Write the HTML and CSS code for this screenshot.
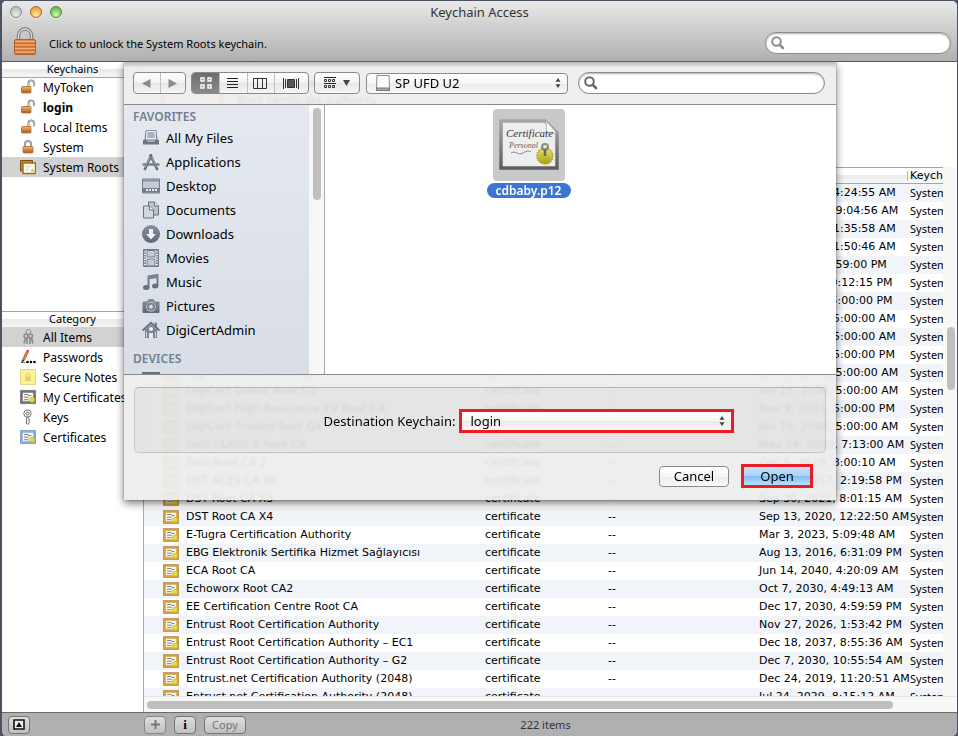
FILE: index.html
```html
<!DOCTYPE html>
<html lang="en">
<head>
<meta charset="utf-8">
<title>Keychain Access</title>
<link rel="stylesheet" href="styles.css">
</head>
<body>
<svg class="defs" aria-hidden="true">
  <defs>
    <linearGradient id="brass" x1="0" y1="0" x2="0" y2="1"><stop offset="0" stop-color="#e8a25e"/><stop offset=".3" stop-color="#f3b678"/><stop offset="1" stop-color="#b0561c"/></linearGradient>
    <linearGradient id="slate" x1="0" y1="0" x2="0" y2="1"><stop offset="0" stop-color="#8993a0"/><stop offset="1" stop-color="#5d6875"/></linearGradient>
    <linearGradient id="frame" x1="0" y1="0" x2="0" y2="1"><stop offset="0" stop-color="#a6a6a6"/><stop offset="1" stop-color="#5e5e5e"/></linearGradient>
    <linearGradient id="seal" x1="0" y1="0" x2="0" y2="1"><stop offset="0" stop-color="#eae66a"/><stop offset="1" stop-color="#a89d17"/></linearGradient>
    <symbol id="unlocked" viewBox="0 0 16 16"><path d="M8.500 8V4.300a2.700 2.700 0 0 1 5.400 0v3" fill="none" stroke="#8b8b8b" stroke-width="2"/><path d="M8.500 8V4.300a2.700 2.700 0 0 1 5.400 0v3" fill="none" stroke="#d8d8d8" stroke-width=".7"/><rect x="1.500" y="7.500" width="9.500" height="6.500" rx="1" fill="url(#brass)" stroke="#b06a2e" stroke-width=".8"/><path d="M2 10h8.500M2 12h8.500" stroke="#a95b22" stroke-width=".6"/></symbol>
    <symbol id="locked" viewBox="0 0 16 16"><path d="M5 8V5a3 3 0 0 1 6 0v3" fill="none" stroke="#858585" stroke-width="2"/><path d="M5 8V5a3 3 0 0 1 6 0v3" fill="none" stroke="#d4d4d4" stroke-width=".7"/><rect x="3" y="7.500" width="10" height="6.500" rx="1" fill="url(#brass)" stroke="#b06a2e" stroke-width=".8"/><path d="M3.500 10h9M3.500 12h9" stroke="#a95b22" stroke-width=".6"/></symbol>
    <symbol id="roots" viewBox="0 0 16 16"><path d="M.5 1.500h12V12H.5z" fill="#c48a35" stroke="#7a4d12"/><path d="M3 4h12.500v10.500H3z" fill="#fdfbf4" stroke="#a06a1d" stroke-width="1.400"/><path d="M5 7h7M5 9h5M5 11h4" stroke="#d5cdbb" stroke-width=".8"/><circle cx="12.500" cy="11.500" r="1.700" fill="#d6d84e"/></symbol>
    <symbol id="keys" viewBox="0 0 16 16"><g fill="none" stroke="#8c8c8c"><circle cx="8.500" cy="3" r="2.500"/><circle cx="6" cy="7" r="2" stroke-width="1.500"/><circle cx="10.500" cy="7" r="2" stroke-width="1.500"/><path d="M5.500 9 4 14.500M7 9v6M10 9v6M11.500 9l1.500 5.500" stroke-width="1.700"/></g></symbol>
    <symbol id="pencil" viewBox="0 0 16 16"><path d="M1.500 13.500 3 9.500 6.500 2l2 .8L5 10.500z" fill="#e88546" stroke="#7c4a2b" stroke-width=".6"/><path d="m6.500 2 2 .8.6-1.500-2-.8z" fill="#c44"/><path d="m1.500 13.500 1-3 2 1z" fill="#333"/><path d="M1 13.500h4.500" stroke="#777"/><circle cx="7.500" cy="13" r="1.300"/><circle cx="11" cy="13" r="1.300"/><circle cx="14.500" cy="13" r="1.300"/></symbol>
    <symbol id="note" viewBox="0 0 16 16"><path d="M.5.500h15v15H.5z" fill="#fbf390" stroke="#e3d98b"/><path d="M6.300 8V6a1.700 1.700 0 0 1 3.400 0v2" fill="none" stroke="#ddd27a"/><rect x="5.300" y="7.500" width="5.400" height="4.500" fill="#dfd16a"/></symbol>
    <symbol id="cert" viewBox="0 0 16 14"><path d="M1.500 1.500h13v11h-13z" fill="#f7f7f4" stroke="currentColor" stroke-width="2.600"/><path d="M.3.300h15.400v13.400H.3z" fill="none" stroke="#555" stroke-opacity=".5" stroke-width=".6"/><path d="M4 4.500h4.500M8.500 5.500h3M4 7.200h5M4 9.700h4.500" stroke="#777" stroke-width=".9"/><circle cx="12" cy="9.700" r="2.600" fill="#e6dc3a" stroke="#b8ab24" stroke-width=".5"/></symbol>
    <symbol id="key" viewBox="0 0 16 16"><circle cx="7.500" cy="4.500" r="3.700" fill="#f2f2f2" stroke="#777"/><circle cx="7.500" cy="4.500" r="1.500" fill="#fff" stroke="#666"/><path d="M6.500 8.300h2.200v1.500l1.300.9-1.300 1 1.200 1-1.200 1.300v1l-1.100 1-1.100-1z" fill="#eee" stroke="#666" stroke-width=".8"/></symbol>
    <symbol id="allfiles" viewBox="0 0 18 18"><path d="M4 1.500h10l1 9.500H3z" fill="#eceff3" stroke="url(#slate)"/><path d="M5.500 4h7M5.300 6h7.500M5 8h8" stroke="#6f7986"/><path d="M1 11h3.500l1 1.500h7l1-1.500H17v4.500H1z" fill="#6c7784"/></symbol>
    <symbol id="apps" viewBox="0 0 18 18"><path d="M.5 11.500h17" stroke="#7a8592" stroke-width="2.500"/><path d="M9.500 1.500 2.500 17M8 1.500 15.500 17" stroke="#66717e" stroke-width="2.600"/><path d="m8.200 3.500-5 11M9.800 4.500l4.500 9.500" stroke="#b3bbc5" stroke-width=".7"/></symbol>
    <symbol id="desktop" viewBox="0 0 18 18"><path d="M.5 2h17v14H.5z" fill="#c3cad4" stroke="#717c89"/><path d="M1 2.500h16v2H1z" fill="#8a94a1"/><path d="M1 11h16v4.500H1z" fill="#737e8b"/><path d="M4 13h2M7 13h2M10 13h2M13 13h2" stroke="#eef1f5" stroke-width="2"/></symbol>
    <symbol id="docs" viewBox="0 0 18 18"><path d="M6.500 1h6l4 4v9h-10z" fill="#bac2cc" stroke="#687380"/><path d="M12.500 1v4h4" fill="#edf0f4" stroke="#687380"/><path d="M1.500 5h6l4 4v8h-10z" fill="#d1d7df" stroke="#687380"/><path d="M7.500 5v4h4" fill="#f3f5f8" stroke="#687380"/></symbol>
    <symbol id="down" viewBox="0 0 18 18"><circle cx="9" cy="9" r="9" fill="url(#slate)"/><path d="M7 4h4v5h3l-5 5.500L4 9h3z" fill="#f1f4f8"/></symbol>
    <symbol id="movies" viewBox="0 0 18 18"><path d="M1.500.5h15v17h-15z" fill="#eef1f5" stroke="#717b88"/><path d="M5 1.500h8V8H5zM5 10h8v7H5z" fill="#c3cad3" stroke="#75808d"/><path d="M3 1v17M15 1v17" stroke="#717b88" stroke-width="1.700" stroke-dasharray="1.500 1"/></symbol>
    <symbol id="music" viewBox="0 0 18 18"><path d="M6.500 14V3.500L15.500 2v11" fill="none" stroke="#66717e" stroke-width="1.800"/><path d="M6 2.500 16 1v4L6 6.500z" fill="#7a8592"/><ellipse cx="4.300" cy="14.500" rx="3.300" ry="2.500" fill="#66717e"/><ellipse cx="13.200" cy="13" rx="3.200" ry="2.500" fill="#66717e"/></symbol>
    <symbol id="camera" viewBox="0 0 18 18"><path d="M1.500 4.500H5L6.500 2h5L13 4.500h3.500a1 1 0 0 1 1 1V15a1 1 0 0 1-1 1h-15a1 1 0 0 1-1-1V5.500a1 1 0 0 1 1-1z" fill="url(#slate)"/><circle cx="9" cy="9.800" r="4.800" fill="#e1e5eb"/><circle cx="9" cy="9.800" r="3.300" fill="#a9b2bd" stroke="#697481" stroke-width="1.500"/><circle cx="9" cy="9.500" r="1.200" fill="#e8ebf0"/></symbol>
    <symbol id="home" viewBox="0 0 18 18"><path d="M12.500 1.500H15v5h-2.500zM3 8.500h12V17H3z" fill="#7b8693"/><path d="M3 9 9 3.500 15 9z" fill="#7b8693"/><path d="M.7 9.500 9 1.800l8.300 7.700" fill="none" stroke="#66717e" stroke-width="2"/><circle cx="9" cy="8" r="2" fill="#eef1f5"/><path d="M7 12h4v5H7z" fill="#e6eaef"/><path d="M4.500 11v5M13.500 11v5" stroke="#d5dbe2"/></symbol>
    <symbol id="glass" viewBox="0 0 14 14"><circle cx="5.500" cy="5.500" r="4.300" fill="none" stroke="currentColor" stroke-width="2"/><path d="m8.800 8.800 3.200 3.200" stroke="currentColor" stroke-width="2.600" stroke-linecap="round"/></symbol>
    <symbol id="arrows" viewBox="0 0 6 12"><path d="M3 0 6 4.500H0zM3 12 0 7.500h6z" fill="#444"/></symbol>
  </defs>
</svg>

<div class="window">
  <header class="titlebar">
    <div class="titlerow">
      <div class="lights">
        <button class="light gray" aria-label="Close"></button>
        <button class="light amber" aria-label="Minimize"></button>
        <button class="light green" aria-label="Zoom"></button>
      </div>
      <h1>Keychain Access</h1>
    </div>
    <div class="unlockrow">
      <button class="biglock" aria-label="Unlock">
        <svg viewBox="0 0 24 30" width="24" height="30"><path d="M5.500 13V8.500a6.500 6.500 0 0 1 13 0V13" fill="none" stroke="#777" stroke-width="3.400"/><path d="M5.500 13V8.500a6.500 6.500 0 0 1 13 0V13" fill="none" stroke="#d9d9d9" stroke-width="1.400"/><rect x="1.500" y="12.500" width="21" height="15" rx="1.500" fill="#e08a4a" stroke="#b05f2b"/><path d="M2 14.500h20M2 18h20M2 21.500h20M2 25h20" stroke="#f4b17c" stroke-width="1.200"/><path d="M2 16.300h20M2 19.800h20M2 23.300h20M2 26.800h20" stroke="#c05f24" stroke-width=".9"/></svg>
      </button>
      <span class="unlocktext">Click to unlock the System Roots keychain.</span>
      <label class="search outer"><svg width="14" height="14"><use href="#glass"/></svg><input type="search" aria-label="Search items"></label>
    </div>
  </header>

  <div class="body">
    <aside class="side">
      <section class="keychains">
        <h2>Keychains</h2>
        <ul>
          <li><svg><use href="#unlocked"/></svg><a href="#">MyToken</a></li>
          <li><svg><use href="#unlocked"/></svg><a href="#"><b>login</b></a></li>
          <li><svg><use href="#unlocked"/></svg><a href="#">Local Items</a></li>
          <li><svg><use href="#locked"/></svg><a href="#">System</a></li>
          <li class="on"><svg><use href="#roots"/></svg><a href="#">System Roots</a></li>
        </ul>
      </section>
      <section class="categories">
        <h2>Category</h2>
        <ul>
          <li class="on"><svg><use href="#keys"/></svg><a href="#">All Items</a></li>
          <li><svg><use href="#pencil"/></svg><a href="#">Passwords</a></li>
          <li><svg><use href="#note"/></svg><a href="#">Secure Notes</a></li>
          <li><svg class="c-gray"><use href="#cert"/></svg><a href="#">My Certificates</a></li>
          <li><svg><use href="#key"/></svg><a href="#">Keys</a></li>
          <li><svg class="c-blue"><use href="#cert"/></svg><a href="#">Certificates</a></li>
        </ul>
      </section>
    </aside>

    <main class="main">
      <div class="detail">
        <div class="detailicon"></div>
        <div class="detailtext"><strong>A-Trust-nQual-01</strong><span>Root certificate authority</span></div>
      </div>
      <div class="list">
        <div class="tablewrap">
          <table>
            <colgroup><col class="w-name"><col class="w-kind"><col class="w-mod"><col class="w-exp"><col class="w-key"></colgroup>
            <thead><tr><th>Name</th><th>Kind</th><th>Date Modified</th><th>Expires</th><th>Keychain</th></tr></thead>
            <tbody id="rows"></tbody>
          </table>
        </div>
        <div class="vscroll"><div class="vthumb"></div></div>
      </div>
      <div class="hscroll"><div class="hthumb"></div></div>
    </main>
  </div>

  <footer class="bottom">
    <div class="bottomleft"><button aria-label="Show item details"><svg width="12" height="11" viewBox="0 0 12 11"><path d="M1 1h10v9H1z" fill="#eee" stroke="#111" stroke-width="1.600"/><path d="m6 3 3 5H3z" fill="#111"/></svg></button></div>
    <div class="bottomtools">
      <button class="dim" aria-label="Add"><svg width="9" height="9" viewBox="0 0 9 9"><path d="M4.500 0v9M0 4.500h9" stroke="#777" stroke-width="2"/></svg></button>
      <button class="info" aria-label="Info">i</button>
      <button class="copy">Copy</button>
    </div>
    <span class="count">222 items</span>
  </footer>

  <div class="sheet" role="dialog" aria-label="Open">
    <div class="toolbar">
      <div class="group nav">
        <button aria-label="Back"><svg width="9" height="9" viewBox="0 0 9 9"><path d="M8.500 0v9L0 4.500z" fill="#8c8c8c"/></svg></button>
        <button aria-label="Forward"><svg width="9" height="9" viewBox="0 0 9 9"><path d="M.5 0v9L9 4.500z" fill="#8c8c8c"/></svg></button>
      </div>
      <div class="group views">
        <button class="pressed" aria-label="Icon view"><svg width="12" height="12" viewBox="0 0 12 12"><path d="M1 1h3v3H1zM8 1h3v3H8zM1 8h3v3H1zM8 8h3v3H8z" fill="#777" stroke="#fff" stroke-width="1.400"/></svg></button>
        <button aria-label="List view"><svg width="11" height="12" viewBox="0 0 11 12"><path d="M0 1.500h11M0 4.500h11M0 7.500h11M0 10.500h11" stroke="#222"/></svg></button>
        <button aria-label="Column view"><svg width="14" height="11" viewBox="0 0 14 11"><path d="M.5.500h13v10H.5zM4.500.500v10M9.500.500v10" fill="none" stroke="#333"/></svg></button>
        <button class="flow" aria-label="Cover Flow view"><svg width="16" height="11" viewBox="0 0 16 11"><path d="M.5 0v11M2.500 1v9M13.500 1v9M15.500 0v11" stroke="#333"/><path d="M4.500 1.500h7v8h-7z" fill="#555" stroke="#333"/></svg></button>
      </div>
      <div class="group arrange">
        <button aria-label="Arrange"><svg width="12" height="12" viewBox="0 0 12 12"><path d="M0 .5h12M0 6.500h12" stroke="#222"/><path d="M.5 2.500h2v2h-2zM4.500 2.500h2v2h-2zM8.500 2.500h2v2h-2zM.5 8.500h2v2h-2zM4.500 8.500h2v2h-2zM8.500 8.500h2v2h-2z" fill="none" stroke="#333"/></svg><svg width="7" height="6" viewBox="0 0 7 6"><path d="M0 0h7L3.500 6z" fill="#444"/></svg></button>
      </div>
      <div class="popup place">
        <svg class="drive" width="14" height="16" viewBox="0 0 14 16"><path d="M1 .5h12l.5 12.500v2.500H.5V13z" fill="#fafafa" stroke="#8d8d8d"/><path d="M.5 13h13v2.500H.5z" fill="#aaa" stroke="#777"/></svg>
        <select aria-label="Location"><option>SP UFD U2</option></select>
        <svg class="updown" width="6" height="10"><use href="#arrows"/></svg>
      </div>
      <label class="search inner"><svg width="14" height="14"><use href="#glass"/></svg><input type="search" aria-label="Search files"></label>
    </div>

    <div class="browser">
      <nav class="places">
        <h3>FAVORITES</h3>
        <ul>
          <li><svg><use href="#allfiles"/></svg><a href="#">All My Files</a></li>
          <li><svg><use href="#apps"/></svg><a href="#">Applications</a></li>
          <li><svg><use href="#desktop"/></svg><a href="#">Desktop</a></li>
          <li><svg><use href="#docs"/></svg><a href="#">Documents</a></li>
          <li><svg><use href="#down"/></svg><a href="#">Downloads</a></li>
          <li><svg><use href="#movies"/></svg><a href="#">Movies</a></li>
          <li><svg><use href="#music"/></svg><a href="#">Music</a></li>
          <li><svg><use href="#camera"/></svg><a href="#">Pictures</a></li>
          <li><svg><use href="#home"/></svg><a href="#">DigiCertAdmin</a></li>
        </ul>
        <h3 class="devices">DEVICES</h3>
        <div class="disk"></div>
      </nav>
      <div class="placescroll"><div class="placethumb"></div></div>
      <div class="files">
        <figure>
          <div class="thumb">
            <svg width="60" height="52" viewBox="0 0 60 52">
              <path d="M2 2h44l12 12v35H2z" fill="#eee" stroke="url(#frame)" stroke-width="3.500"/>
              <path d="M46 1c2 6 2 9 1 13 4-1 8-1 12 1z" fill="#fdfdfd" stroke="#999" stroke-width=".7"/>
              <text class="script" x="7" y="18">Certificate</text>
              <text class="script small" x="10" y="29">Personal</text>
              <path d="M12 34c5-3 7 3 12 0s5-2 8-1" fill="none" stroke="#888"/>
              <circle cx="46" cy="37" r="8" fill="url(#seal)" stroke="#aca22e" stroke-width="1.500" stroke-dasharray="1.500 1"/>
              <circle cx="46" cy="28" r="3" fill="none" stroke="#888" stroke-width="2"/><path d="M46 30v7" stroke="#666" stroke-width="2.500"/>
            </svg>
          </div>
          <figcaption>cdbaby.p12</figcaption>
        </figure>
      </div>
    </div>

    <div class="accessory">
      <div class="destbox">
        <label for="dest">Destination Keychain:</label>
        <div class="popup dest">
          <select id="dest"><option>login</option></select>
          <svg class="updown" width="6" height="10"><use href="#arrows"/></svg>
        </div>
      </div>
      <div class="actions">
        <button class="cancel">Cancel</button>
        <button class="open">Open</button>
      </div>
    </div>
  </div>
</div>
<script src="rows.js"></script>
</body>
</html>
```
FILE: rows.js
```
const items = [
  ['Certum CA', 'Nov 1, 2027, 4:24:55 AM'],
  ['Certum Root CA', 'Jan 17, 2029, 9:04:56 AM'],
  ['Chambers of Commerce Root', 'Nov 1, 2037, 1:35:58 AM'],
  ['China Internet Root', 'Nov 9, 2027, 1:50:46 AM'],
  ['Class 2 Primary CA', 'Jul 6, 2019, 4:59:00 PM'],
  ['Common Policy', 'Oct 5, 2027, 9:12:15 PM'],
  ['COMODO Certification', 'Oct 9, 2029, 5:00:00 PM'],
  ['Deutsche Telekom Root CA', 'Nov 9, 2031, 5:00:00 AM'],
  ['DigiCert Assured ID Root CA', 'Nov 9, 2031, 5:00:00 AM'],
  ['DigiCert Assured ID Root G2', 'Nov 9, 2031, 5:00:00 PM'],
  ['DigiCert Global Root G2', 'Jan 15, 2038, 5:00:00 AM'],
  ['DigiCert Global Root G3', 'Jan 15, 2038, 5:00:00 AM'],
  ['DigiCert High Assurance EV Root CA', 'Nov 9, 2031, 5:00:00 PM'],
  ['DigiCert Trusted Root G4', 'Jan 15, 2038, 5:00:00 AM'],
  ['DoD CLASS 3 Root CA', 'May 14, 2020, 7:13:00 AM'],
  ['DoD Root CA 2', 'Dec 5, 2029, 8:00:10 AM'],
  ['DST ACES CA X6', 'Nov 20, 2017, 2:19:58 PM'],
  ['DST Root CA X3', 'Sep 30, 2021, 8:01:15 AM'],
  ['DST Root CA X4', 'Sep 13, 2020, 12:22:50 AM'],
  ['E-Tugra Certification Authority', 'Mar 3, 2023, 5:09:48 AM'],
  ['EBG Elektronik Sertifika Hizmet Sağlayıcısı', 'Aug 13, 2016, 6:31:09 PM'],
  ['ECA Root CA', 'Jun 14, 2040, 4:20:09 AM'],
  ['Echoworx Root CA2', 'Oct 7, 2030, 4:49:13 AM'],
  ['EE Certification Centre Root CA', 'Dec 17, 2030, 4:59:59 PM'],
  ['Entrust Root Certification Authority', 'Nov 27, 2026, 1:53:42 PM'],
  ['Entrust Root Certification Authority – EC1', 'Dec 18, 2037, 8:55:36 AM'],
  ['Entrust Root Certification Authority – G2', 'Dec 7, 2030, 10:55:54 AM'],
  ['Entrust.net Certification Authority (2048)', 'Dec 24, 2019, 11:20:51 AM'],
  ['Entrust.net Certification Authority (2048)', 'Jul 24, 2029, 8:15:12 AM'],
];

document.getElementById('rows').innerHTML = items.map(([name, expires]) => `
  <tr>
    <td class="name"><svg class="c-gold" width="16" height="14"><use href="#cert"/></svg>${name}</td>
    <td>certificate</td><td>--</td><td class="expires">${expires}</td><td class="chain">System Roots</td>
  </tr>`).join('');
```
FILE: styles.css
```css
* { box-sizing: border-box; }
body { margin: 0; background: #4d5663; font-family: "Noto Sans", sans-serif; font-size: 12px; color: #000; }
ul, h1, h2, h3, figure { margin: 0; padding: 0; list-style: none; font-weight: normal; }
a { color: inherit; text-decoration: none; }
button, input, select { font: inherit; color: inherit; margin: 0; padding: 0; border: 0; background: none; }
.defs { position: absolute; width: 0; height: 0; }

.window { position: relative; display: flex; flex-direction: column; height: 100vh; border: solid #4a535f; border-width: 1px 1px 0 2px; border-radius: 6px; overflow: hidden; background: #fff; }

.titlebar { display: flex; flex-direction: column; height: 61px; border-bottom: 1px solid #5a5a5a; background: linear-gradient(#e9e9e9, #cfcfcf 45%, #b0b0b0); }
.titlerow { display: grid; grid-template-columns: 1fr auto 1fr; align-items: center; height: 22px; padding: 0 8px; }
.titlerow h1 { font-size: 13px; line-height: 22px; color: #333; }
.lights { display: flex; gap: 8px; }
.light { width: 12px; height: 12px; border-radius: 50%; border: 1px solid #8a8a8a; box-shadow: 0 1px 0 rgba(255,255,255,.5); }
.gray { background: radial-gradient(circle at 50% 75%, #eee, #bbb 80%); }
.amber { border-color: #a5682a; background: radial-gradient(circle at 50% 80%, #ffe9a0, #f0a43c 75%); }
.green { border-color: #4b8a3d; background: radial-gradient(circle at 50% 80%, #d5f7b5, #6cbf4e 75%); }
.unlockrow { display: flex; align-items: center; flex: 1; padding: 0 6px 0 11px; }
.biglock { display: flex; width: 24px; margin-right: 12px; }
.unlocktext { flex: 1; font-size: 11px; line-height: 16px; padding-top: 4px; }
.search { display: flex; align-items: center; gap: 4px; border: 1px solid #8c8c8c; border-radius: 11px; background: #fff; height: 22px; padding: 0 6px 0 5px; box-shadow: inset 0 1px 2px rgba(0,0,0,.3); color: #8e8e8e; }
.search input { flex: 1; min-width: 0; outline: 0; -webkit-appearance: none; appearance: none; }
.outer { width: 186px; margin-top: 2px; }

.body { display: flex; flex: 1; min-height: 0; }
.side { display: flex; flex-direction: column; width: 142px; border-right: 1px solid #aaa; background: #fff; }
.keychains { flex: 249; }
.categories { flex: 401; }
.side h2 { height: 16px; margin-bottom: -1px; border-bottom: 1px solid #a5a5a5; font-size: 11px; line-height: 14px; text-align: center; background: linear-gradient(#fff 45%, #eaeaea 50%, #f6f6f6); }
.categories h2 { border-top: 1px solid #a5a5a5; height: 17px; }
.side li { display: flex; align-items: center; gap: 7px; height: 20px; padding-left: 18px; white-space: nowrap; overflow: hidden; }
.side li.on { background: #d2d2d2; }
.side li svg { width: 16px; height: 16px; flex: none; }
.c-gray { color: #737373; }
.c-blue { color: #84aee0; }
.c-gold { color: #d9a038; }

.main { display: flex; flex-direction: column; flex: 1; min-width: 0; }
.detail { display: flex; gap: 14px; height: 105px; padding: 12px 17px; }
.detailicon { width: 62px; height: 50px; border: 3px solid #e0a850; }
.detailtext { display: flex; flex-direction: column; font-size: 12px; line-height: 18px; }
.list { display: flex; flex: 1; min-height: 0; }
.tablewrap { flex: 1; min-width: 0; overflow: hidden; }
table { width: 100%; table-layout: fixed; border-collapse: separate; border-spacing: 0; font-family: "DejaVu Sans", sans-serif; font-size: 11px; }
.w-name { width: 338px; }
.w-kind { width: 123px; }
.w-mod { width: 151px; }
.w-exp { width: 151px; }
th, td { padding: 0 0 0 3px; height: 18px; line-height: 18px; text-align: left; white-space: nowrap; overflow: hidden; font-weight: normal; }
th { height: 17px; line-height: 15px; border: solid #a5a5a5; border-width: 1px 0; background: linear-gradient(#fff 45%, #ececec 50%, #f8f8f8); }
th:last-child { background: linear-gradient(#b5b5b5, #b5b5b5) 0 3px / 1px 10px no-repeat, linear-gradient(#fff 45%, #ececec 50%, #f8f8f8); }
tbody tr:nth-child(odd) { background: #f1f5fa; }
td.expires { overflow: visible; }
td.chain { font-family: "Noto Sans", sans-serif; }
.name svg { display: inline-block; vertical-align: middle; margin: 0 7px 0 16px; }
.vscroll { display: flex; flex-direction: column; align-items: center; width: 14px; background: #f8f8f8; padding: 160px 0 0 2px; }
.vthumb { width: 8px; height: 63px; border-radius: 4px; background: #bfbfbf; }
.hscroll { display: flex; align-items: center; height: 16px; background: #f8f8f8; border-top: 1px solid #e6e6e6; padding: 0 64px 0 3px; }
.hthumb { flex: 1; height: 8px; border-radius: 4px; background: #bfbfbf; }

.bottom { position: relative; display: flex; align-items: center; height: 24px; border-top: 1px solid #6a6a6a; background: #b0b0b0; }
.bottom button { display: inline-flex; align-items: center; justify-content: center; height: 18px; min-width: 22px; border: 1px solid #747474; border-radius: 4px; background: linear-gradient(#dedede, #c0c0c0); font-size: 11px; }
.bottomleft { width: 142px; padding-left: 6px; display: flex; }
.bottomtools { display: flex; gap: 8px; }
.bottom .info { font: bold 13px/16px "Liberation Serif", serif; }
.bottom .copy { width: 42px; color: #777; }
.bottom .dim { border-color: #888; }
.count { position: absolute; left: 0; right: 0; text-align: center; font-size: 11px; line-height: 16px; color: #333; padding-left: 132px; pointer-events: none; }

.sheet { position: absolute; top: 61px; left: 122px; right: 121px; background: rgba(237,237,237,.93); box-shadow: 0 3px 8px rgba(0,0,0,.55), 0 0 1px rgba(0,0,0,.6); backdrop-filter: blur(1px); font-size: 13px; clip-path: inset(0 -12px -14px -12px); }
.toolbar { display: flex; align-items: center; gap: 5px; height: 43px; padding: 0 11px 0 9px; border-bottom: 1px solid #8a8a8a; background: linear-gradient(rgba(0,0,0,.22), transparent 6px); }
.group { display: flex; height: 22px; border: 1px solid #8a8a8a; border-radius: 4px; overflow: hidden; background: linear-gradient(#fff, #f2f2f2 50%, #e6e6e6 51%, #f6f6f6); }
.group button { flex: 1; display: flex; align-items: center; justify-content: center; }
.group button + button { box-shadow: inset 1px 0 0 #c0c0c0; }
.group .pressed { background: linear-gradient(#6e6e6e, #8a8a8a); }
.group .flow { flex: 0 0 34px; }
.nav { width: 53px; }
.views { width: 118px; }
.arrange { width: 46px; }
.arrange button { gap: 7px; }
.popup { position: relative; display: flex; align-items: center; height: 21px; border: 1px solid #8a8a8a; border-radius: 4px; background: linear-gradient(#fff, #f6f6f6 50%, #ebebeb 51%, #f8f8f8); }
.popup select { appearance: none; flex: 1; height: 100%; min-width: 0; outline: 0; }
.updown { flex: none; margin-right: 6px; }
.place { width: 202px; margin-left: 1px; padding-left: 9px; gap: 5px; }
.inner { flex: 1; margin-left: 5px; color: #666; }

.browser { display: flex; height: 270px; border-bottom: 1px solid #8a8a8a; background: #fff; }
.places { width: 185px; overflow: hidden; padding: 4px 0 0 9px; background: linear-gradient(#e5e9ef, #d8dde6); }
.places h3 { font-size: 12px; line-height: 16px; font-weight: 600; color: #727f8e; }
.places ul { padding-top: 1px; }
.places li { display: flex; align-items: center; gap: 6px; height: 24px; padding-left: 9px; }
.places li svg { width: 18px; height: 18px; }
.places .devices { padding-top: 9px; }
.disk { width: 18px; height: 4px; margin: 5px 0 0 9px; background: #66717e; }
.placescroll { display: flex; justify-content: center; width: 16px; padding-top: 3px; border-right: 1px solid #aaa; background: #f7f7f7; }
.placethumb { width: 8px; height: 92px; border-radius: 4px; background: #bfbfbf; }
.files { flex: 1; padding: 4px 104px 0 0; }
figure { display: flex; flex-direction: column; align-items: center; gap: 2px; }
.thumb { display: flex; align-items: center; justify-content: center; width: 72px; height: 72px; border-radius: 4px; background: #c9c9c9; }
.script { font: italic 11px "Liberation Serif", serif; fill: #333; }
.small { font-size: 8px; fill: #666; }
figcaption { height: 15px; line-height: 15px; padding: 0 9px; border-radius: 8px; background: #3b76d3; color: #fff; font-size: 12px; font-weight: 600; }

.accessory { padding: 12px 10px 12px; }
.destbox { display: flex; align-items: center; justify-content: center; gap: 4px; height: 66px; border: 1px solid #c3c3c3; border-top-color: #b0b0b0; border-radius: 5px; background: rgba(0,0,0,.04); padding: 2px 0 0 98px; }
.dest { width: 275px; height: 24px; border: 3px solid #ed1c24; border-radius: 0; padding-left: 8px; }
.actions { display: flex; justify-content: flex-end; align-items: center; gap: 12px; padding: 11px 13px 0 0; }
.actions button { border: 1px solid #8a8a8a; border-radius: 4px; width: 70px; height: 21px; line-height: 18px; background: linear-gradient(#fff, #f6f6f6 50%, #ececec 51%, #fafafa); }
.actions .open { width: 72px; height: 24px; border: 3px solid #ed1c24; border-radius: 0; background: linear-gradient(#c9e1f8, #a9d2f7 50%, #7fbdf3 51%, #b5e3fd); }
```
